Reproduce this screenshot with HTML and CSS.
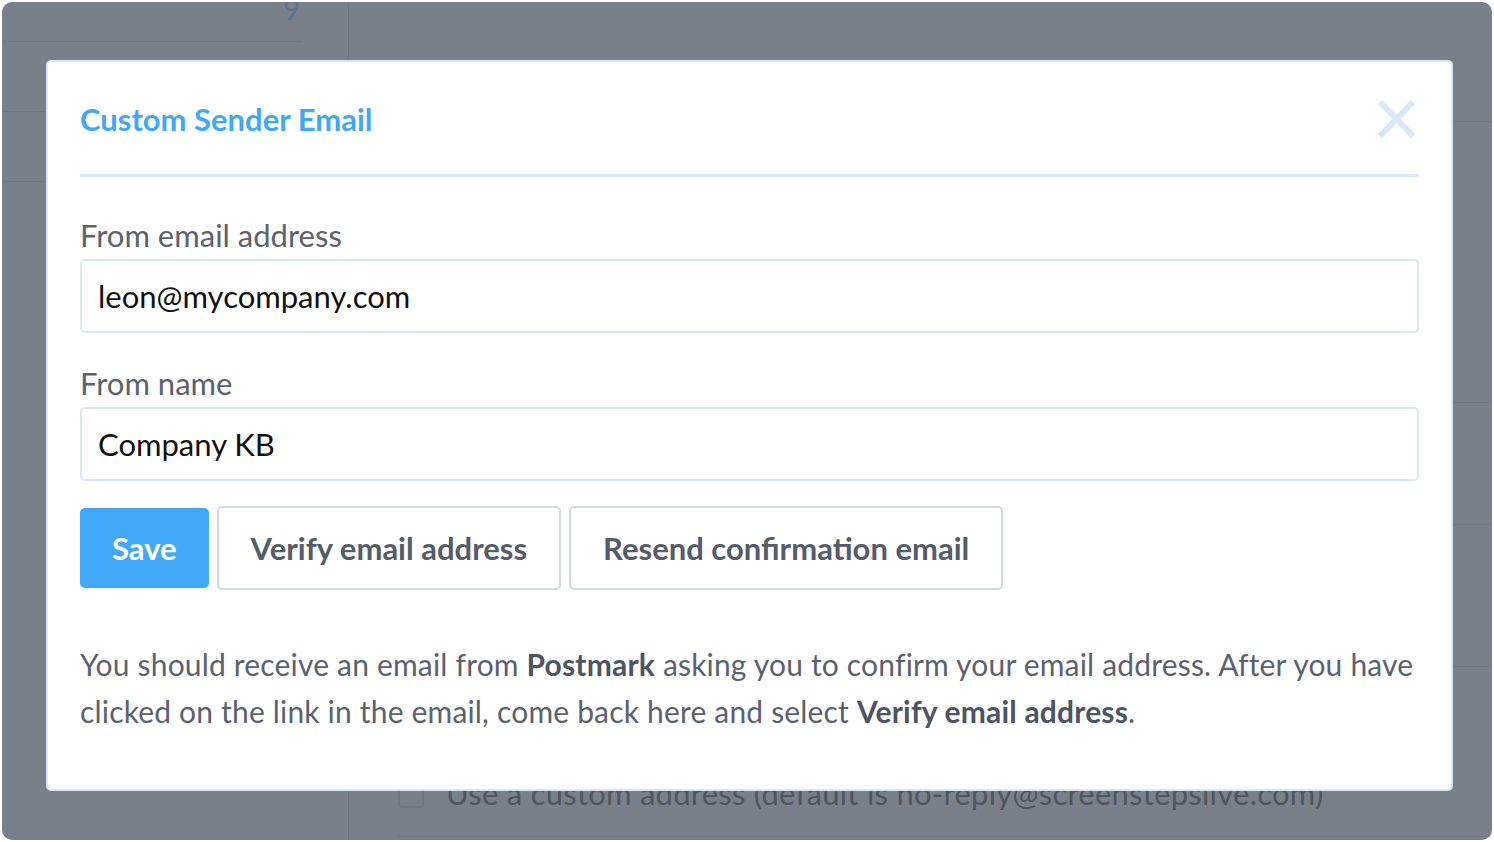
FILE: index.html
```html
<!DOCTYPE html>
<html lang="en">
<head>
<meta charset="utf-8">
<title>Custom Sender Email</title>
<link rel="stylesheet" href="styles.css">
</head>
<body>
<div class="window">
  <div class="page">
    <aside class="sidebar">
      <div class="srow srow-num"><span class="num">9</span></div>
      <div class="srow srow-2"></div>
      <div class="srow srow-3"></div>
    </aside>
    <main class="main">
      <div class="mrow mrow-1"></div>
      <div class="mrow mrow-2"></div>
      <div class="mrow mrow-3"></div>
      <div class="mrow mrow-4"></div>
      <div class="check-row">
        <span class="checkbox"></span>
        <span class="check-label">Use a custom address (default is no-reply@screenstepslive.com)</span>
      </div>
    </main>
  </div>

  <div class="modal">
    <div class="modal-header">
      <h1 class="modal-title">Custom Sender Email</h1>
      <svg class="close" width="42" height="40" viewBox="0 0 42 40" aria-label="Close">
        <path d="M5 3 L38 37 M38 3 L5 37" stroke="#d6e9f8" stroke-width="6" fill="none"/>
      </svg>
    </div>
    <form class="modal-body">
      <label class="field-label">From email address</label>
      <div class="input">leon@mycompany.com</div>
      <label class="field-label second">From name</label>
      <div class="input">Company KB</div>
      <div class="buttons">
        <span class="btn btn-primary">Save</span>
        <span class="btn">Verify email address</span>
        <span class="btn">Resend confirmation email</span>
      </div>
      <p class="note">You should receive an email from <b>Postmark</b> asking you to confirm your email address. After you have clicked on the link in the email, come back here and select <b>Verify email address</b>.</p>
    </form>
  </div>
</div>
</body>
</html>
```

FILE: styles.css
```css
* { box-sizing: border-box; }

html, body {
  margin: 0;
  padding: 0;
  height: 100%;
  background: #ffffff;
  font-family: "Lato", "Noto Sans", sans-serif;
}

.window {
  position: relative;
  margin: 2px;
  height: 838px;
  width: 1490px;
  background: #7a808a;
  border-radius: 10px;
  overflow: hidden;
}

.page {
  display: flex;
  height: 100%;
}

.sidebar {
  width: 347px;
  border-right: 1px solid #717680;
  flex: none;
}

.srow { border-bottom: 1px solid #717680; }

.srow-num {
  height: 40px;
  margin-right: 46px;
  text-align: right;
}

.num {
  display: inline-block;
  color: #5d7190;
  font-size: 29px;
  line-height: 20px;
  margin-top: -3px;
  margin-right: 2px;
}

.srow-2 { height: 70px; }
.srow-3 { height: 70px; }

.main {
  flex: 1;
  padding-left: 49px;
  display: flex;
  flex-direction: column;
}

.mrow { border-bottom: 1px solid #717680; }
.mrow-1 { height: 120px; }
.mrow-2 { height: 281px; }
.mrow-3 { height: 122px; }
.mrow-4 { height: 142px; }

.check-row {
  display: flex;
  align-items: flex-start;
  gap: 22px;
  height: 170px;
  padding-top: 117px;
  border-bottom: 1px solid #717680;
}

.checkbox {
  width: 26px;
  height: 24px;
  border: 2px solid #6f747e;
  border-radius: 4px;
  flex: none;
}

.check-label {
  color: #50565f;
  font-size: 31px;
  line-height: 30px;
  margin-top: -6px;
  letter-spacing: 0.25px;
}

/* Modal */
.modal {
  position: absolute;
  left: 44px;
  top: 58px;
  width: 1407px;
  background: #ffffff;
  border: 2px solid #d6e8f8;
  border-radius: 5px;
  padding: 0 32px 54px 32px;
}

.modal-header {
  display: flex;
  justify-content: space-between;
  align-items: center;
  padding: 37px 0 35px;
  border-bottom: 3px solid #d6e9f9;
}

.modal-title {
  margin: 0;
  font-size: 31px;
  line-height: 40px;
  font-weight: 700;
  color: #3fa9f5;
}

.close {
  display: block;
  margin-right: 2px;
}

.modal-body {
  display: flex;
  flex-direction: column;
  margin: 0;
}

.field-label {
  display: block;
  margin-top: 40px;
  margin-bottom: 6px;
  font-size: 31px;
  line-height: 36px;
  color: #5a6270;
}

.field-label.second { margin-top: 32px; }

.input {
  height: 74px;
  border: 2px solid #d8e8f7;
  border-radius: 5px;
  padding: 0 16px;
  display: flex;
  align-items: center;
  font-size: 31px;
  color: #111111;
}

.buttons {
  display: flex;
  align-items: center;
  gap: 8px;
  margin-top: 25px;
}

.btn {
  height: 84px;
  display: inline-flex;
  align-items: center;
  padding: 0 32px;
  border: 2px solid #d3d9e0;
  border-radius: 5px;
  background: #ffffff;
  color: #545c69;
  font-size: 31px;
  font-weight: 700;
}

.btn-primary {
  height: 80px;
  padding: 0 30px;
  background: #42a8fa;
  border-color: #42a8fa;
  color: #ffffff;
}

.note {
  margin: 51px 0 0;
  font-size: 30px;
  line-height: 47px;
  color: #5a6270;
  letter-spacing: 0.18px;
}

.note b {
  font-weight: 700;
  color: #4d5562;
}
```
